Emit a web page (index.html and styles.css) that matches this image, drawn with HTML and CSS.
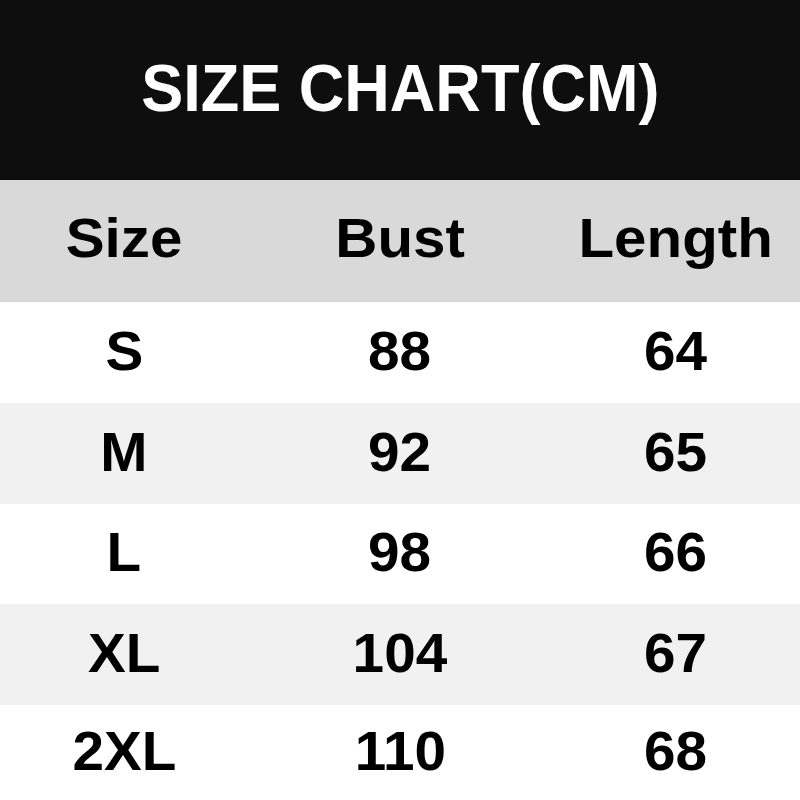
FILE: index.html
```html
<!DOCTYPE html>
<html>
<head>
<meta charset="utf-8">
<link rel="stylesheet" href="styles.css">
</head>
<body>
<div class="chart">
  <div class="title"><span>SIZE CHART(CM)</span></div>
  <div class="row head">
    <div class="cell"><span>Size</span></div>
    <div class="cell"><span>Bust</span></div>
    <div class="cell"><span>Length</span></div>
  </div>
  <div class="row">
    <div class="cell"><span>S</span></div>
    <div class="cell"><span>88</span></div>
    <div class="cell"><span>64</span></div>
  </div>
  <div class="row alt">
    <div class="cell"><span>M</span></div>
    <div class="cell"><span>92</span></div>
    <div class="cell"><span>65</span></div>
  </div>
  <div class="row short">
    <div class="cell"><span>L</span></div>
    <div class="cell"><span>98</span></div>
    <div class="cell"><span>66</span></div>
  </div>
  <div class="row alt">
    <div class="cell"><span>XL</span></div>
    <div class="cell"><span>104</span></div>
    <div class="cell"><span>67</span></div>
  </div>
  <div class="row last">
    <div class="cell"><span>2XL</span></div>
    <div class="cell"><span>110</span></div>
    <div class="cell"><span>68</span></div>
  </div>
</div>
</body>
</html>
```

FILE: styles.css
```css
html, body {
  margin: 0;
  padding: 0;
  background: #ffffff;
}
.chart {
  width: 800px;
  height: 800px;
  display: flex;
  flex-direction: column;
  overflow: hidden;
  font-family: "Liberation Sans", Arial, sans-serif;
  font-weight: bold;
  color: #000;
}
.title {
  height: 180px;
  flex: none;
  background: #0e0e0e;
  color: #fff;
  display: flex;
  align-items: center;
  justify-content: center;
  font-size: 66px;
  padding-bottom: 4px;
  box-sizing: border-box;
}
.title span {
  display: inline-block;
  transform: scaleX(0.955);
}
.row {
  height: 101px;
  flex: none;
  display: grid;
  grid-template-columns: 248px 304px 248px;
  background: #ffffff;
}
.row.short { height: 100px; }
.row.last { flex: 1; height: auto; }
.row.alt { background: #f1f1f1; }
.row.head {
  height: 122px;
  background: #d9d9d9;
}
.cell {
  display: flex;
  align-items: center;
  justify-content: center;
  font-size: 55px;
  padding-bottom: 4px;
  box-sizing: border-box;
}
.cell span {
  display: inline-block;
  transform: scaleX(1.03);
}
.row.head .cell {
  padding-bottom: 6px;
}
.row.head .cell span {
  transform: scaleX(1.06);
}
```
